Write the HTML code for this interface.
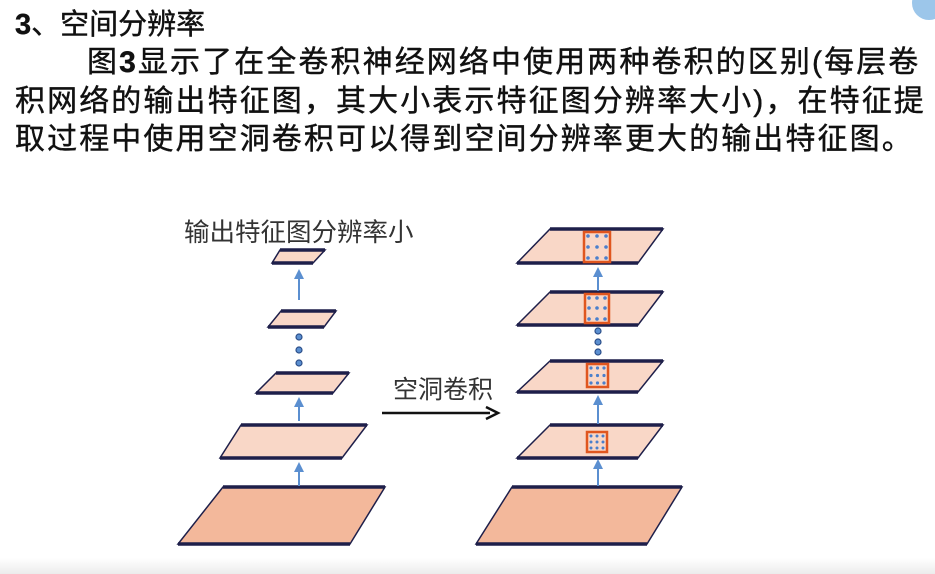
<!DOCTYPE html>
<html><head><meta charset="utf-8"><style>
html,body{margin:0;padding:0;background:#fff;}
body{width:935px;height:574px;position:relative;overflow:hidden;font-family:"Liberation Sans","Noto Sans CJK SC",sans-serif;color:#111;}
.t{position:absolute;left:15px;font-size:30px;letter-spacing:2.1px;white-space:nowrap;line-height:38px;-webkit-text-stroke:0.4px #111;}
</style></head><body>
<div class="t" style="top:6px;font-size:29px;letter-spacing:0"><b>3</b>、空间分辨率</div>
<div class="t" style="top:44px;left:87px">图<b>3</b>显示了在全卷积神经网络中使用两种卷积的区别(每层卷</div>
<div class="t" style="top:83px">积网络的输出特征图，其大小表示特征图分辨率大小)，在特征提</div>
<div class="t" style="top:121px">取过程中使用空洞卷积可以得到空间分辨率更大的输出特征图。</div>
<div style="position:absolute;left:912px;top:-14px;width:34px;height:34px;border-radius:50%;background:#9cc6ea;"></div>
<div style="position:absolute;left:0;top:558px;width:935px;height:16px;background:linear-gradient(#fff,#ececec);"></div>
<svg width="935" height="574" style="position:absolute;left:0;top:0" xmlns="http://www.w3.org/2000/svg">
<defs>
<marker id="ah" markerWidth="5" markerHeight="5" refX="2.5" refY="2.5" orient="auto"><path d="M0,0 L5,2.5 L0,5 z" fill="#5b8fd0"/></marker>
</defs>
<g font-family="Liberation Sans,Noto Sans CJK SC,sans-serif" fill="#333">
<text x="184" y="241" font-size="25.5">输出特征图分辨率小</text>
<text x="393" y="398" font-size="25">空洞卷积</text>
</g>
<g stroke="#1e1f4a" stroke-width="1.5" fill="#f9d7c7">
<polygon points="280,250 325,250 313,263 272,263"/>
<polygon points="281,311 336,311 324,327 268,327"/>
<polygon points="276,373 349,373 333,393 256,393"/>
<polygon points="241,425 367,425 342,458 220,458"/>
<polygon points="223,487 385,487 350,544 178,544" fill="#f3b89b"/>
<polygon points="550,229 663,229 638,263 517,263"/>
<polygon points="550,292 663,292 638,325 517,325"/>
<polygon points="550,361 663,361 638,392 517,392"/>
<polygon points="550,425 663,425 638,458 517,458"/>
<polygon points="512,487 682,487 647,544 476,544" fill="#f3b89b"/>
</g>
<g stroke="#1e1f4a" stroke-width="3.5">
<line x1="280" y1="250" x2="325" y2="250"/><line x1="272" y1="263" x2="313" y2="263"/>
<line x1="281" y1="311" x2="336" y2="311"/><line x1="268" y1="327" x2="324" y2="327"/>
<line x1="276" y1="373" x2="349" y2="373"/><line x1="256" y1="393" x2="333" y2="393"/>
<line x1="241" y1="425" x2="367" y2="425"/><line x1="220" y1="458" x2="342" y2="458"/>
<line x1="223" y1="487" x2="385" y2="487"/><line x1="178" y1="544" x2="350" y2="544"/>
<line x1="550" y1="229" x2="663" y2="229"/><line x1="517" y1="263" x2="638" y2="263"/>
<line x1="550" y1="292" x2="663" y2="292"/><line x1="517" y1="325" x2="638" y2="325"/>
<line x1="550" y1="361" x2="663" y2="361"/><line x1="517" y1="392" x2="638" y2="392"/>
<line x1="550" y1="425" x2="663" y2="425"/><line x1="517" y1="458" x2="638" y2="458"/>
<line x1="512" y1="487" x2="682" y2="487"/><line x1="476" y1="544" x2="647" y2="544"/>
</g>
<g stroke="#5b8fd0" stroke-width="2" marker-end="url(#ah)">
<line x1="299" y1="300" x2="299" y2="274"/>
<line x1="299" y1="421" x2="299" y2="402"/>
<line x1="299" y1="486" x2="299" y2="467"/>
<line x1="598" y1="291" x2="598" y2="272"/>
<line x1="598" y1="424" x2="598" y2="400"/>
<line x1="598" y1="486" x2="598" y2="464"/>
</g>
<g fill="#5b8fd0" stroke="#2c4f8a" stroke-width="1.2">
<circle cx="299" cy="337" r="3"/><circle cx="299" cy="350" r="3"/><circle cx="299" cy="363" r="3"/>
<circle cx="598" cy="331" r="3"/><circle cx="598" cy="342" r="3"/><circle cx="598" cy="352" r="3"/>
</g>
<line x1="382" y1="413" x2="490" y2="413" stroke="#111" stroke-width="2.5"/>
<path d="M486,407 L498,413 L486,419" fill="none" stroke="#111" stroke-width="2.5"/>
<g stroke="#e0561f" stroke-width="2.5" fill="none">
<rect x="584" y="232" width="26" height="30"/>
<rect x="585" y="294" width="24" height="29"/>
<rect x="587" y="364" width="21" height="23"/>
<rect x="587" y="432" width="20" height="20"/>
</g>
<g fill="#4a7fcc">
<circle cx="588" cy="236" r="1.8"/><circle cx="597" cy="236" r="1.8"/><circle cx="606" cy="236" r="1.8"/>
<circle cx="588" cy="247" r="1.8"/><circle cx="597" cy="247" r="1.8"/><circle cx="606" cy="247" r="1.8"/>
<circle cx="588" cy="258" r="1.8"/><circle cx="597" cy="258" r="1.8"/><circle cx="606" cy="258" r="1.8"/>
<circle cx="589" cy="298" r="1.8"/><circle cx="597" cy="298" r="1.8"/><circle cx="605" cy="298" r="1.8"/>
<circle cx="589" cy="308" r="1.8"/><circle cx="597" cy="308" r="1.8"/><circle cx="605" cy="308" r="1.8"/>
<circle cx="589" cy="319" r="1.8"/><circle cx="597" cy="319" r="1.8"/><circle cx="605" cy="319" r="1.8"/>
<circle cx="591" cy="368" r="1.6"/><circle cx="597.5" cy="368" r="1.6"/><circle cx="604" cy="368" r="1.6"/>
<circle cx="591" cy="375.5" r="1.6"/><circle cx="597.5" cy="375.5" r="1.6"/><circle cx="604" cy="375.5" r="1.6"/>
<circle cx="591" cy="383" r="1.6"/><circle cx="597.5" cy="383" r="1.6"/><circle cx="604" cy="383" r="1.6"/>
<circle cx="591" cy="436" r="1.5"/><circle cx="597" cy="436" r="1.5"/><circle cx="603" cy="436" r="1.5"/>
<circle cx="591" cy="442" r="1.5"/><circle cx="597" cy="442" r="1.5"/><circle cx="603" cy="442" r="1.5"/>
<circle cx="591" cy="448" r="1.5"/><circle cx="597" cy="448" r="1.5"/><circle cx="603" cy="448" r="1.5"/>
</g>
</svg>
</body></html>
